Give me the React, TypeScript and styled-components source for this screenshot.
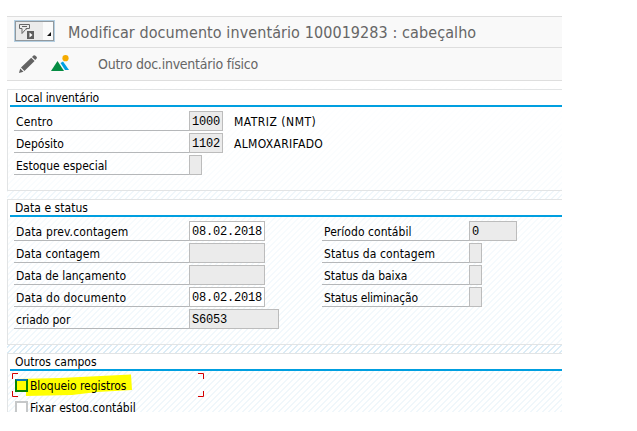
import React from 'react';
import styled, { createGlobalStyle } from 'styled-components';

const Global = createGlobalStyle`
  * { box-sizing: border-box; }
  body { margin: 0; background: #fff; }
`;

const Page = styled.div`
  width: 637px;
  height: 431px;
  padding: 16px 0 0 7px;
  overflow: hidden;
  background: #fff;
  font: 12px/15px 'DejaVu Sans Condensed', 'DejaVu Sans', sans-serif;
  font-stretch: condensed;
  color: #000;
`;

const Window = styled.div`
  width: 555px;
  height: 396px;
  overflow: hidden;
  display: flex;
  flex-direction: column;
  background:
    linear-gradient(#fff 64px, rgba(255, 255, 255, 0) 350px),
    repeating-linear-gradient(135deg, #d9ebf6 0 2px, #fff 2px 4.243px);
`;

const Bar = styled.div<{ $h: number }>`
  flex: none;
  height: ${p => p.$h}px;
  display: flex;
  align-items: center;
  border-top: 1px solid #dedede;
  background: #f9f9f9;
  color: #666;
`;

const ToolBar = styled(Bar)`
  border-bottom: 1px solid #dedede;
  padding-left: 12px;
`;

const CommandBox = styled.div`
  width: 41px;
  height: 22px;
  margin: -2px 0 0 7px;
  border: 1px solid #b4cfe2;
  box-shadow: inset 0 0 0 1px #92999e;
  background: linear-gradient(90deg, #ebebeb 28px, #fafafa 28px);
`;

const Text = styled.span<{ $track?: number }>`
  white-space: pre;
  letter-spacing: ${p => p.$track ?? 0}px;
`;

const Title = styled(Text)`
  font-size: 16px;
  line-height: 20px;
  margin: 1px 0 0 13px;
`;

const Action = styled(Text)`
  font-size: 14px;
  line-height: 18px;
  margin-left: 29px;
`;

const Panel = styled.section<{ $h: number }>`
  flex: none;
  height: ${p => p.$h}px;
  margin-top: 8px;
  border: 1px solid #e2e4e5;
  border-right: 0;
  background: rgba(255, 255, 255, 0.6);
`;

const PanelTitle = styled.header`
  height: 17px;
  padding: 1px 0 0 7px;
  background: linear-gradient(#009fe0, #009fe0) 2px 15px / 100% 2px no-repeat, #fff;
`;

const Columns = styled.div`
  display: grid;
  grid-template-columns: 308px 1fr;
  padding: 4px 0 0 6px;
`;

const Fields = styled.div`
  display: flex;
  flex-direction: column;
  gap: 2px;
`;

const Row = styled.div<{ $label: number }>`
  display: grid;
  grid-template-columns: ${p => p.$label}px auto 1fr;
  height: 20px;
`;

const Label = styled.div`
  border-bottom: 1px solid #b5b7b9;
  padding: 4px 0 0 2px;
  height: 20px;
`;

const Field = styled.div<{ $w: number; $editable?: boolean }>`
  width: ${p => p.$w}px;
  height: 20px;
  border: 1px solid #bcbcbc;
  background: ${p => (p.$editable ? '#fff' : '#ebebeb')};
  padding: 3px 0 0 2px;
  font: 12px/15px 'Liberation Mono', monospace;
`;

const Description = styled.div`
  padding: 4px 0 0 11px;
`;

const Options = styled.div`
  padding: 2px 0 0 4px;
`;

const Focus = styled.div`
  position: relative;
  width: 192px;
  height: 24px;
  margin-bottom: -2px;
`;

const Overlay = styled.svg`
  position: absolute;
  inset: 0;
  overflow: visible;
`;

const Option = styled.div`
  position: relative;
  display: flex;
  height: 22px;
  padding: 6px 0 0 3px;
  gap: 2px;
`;

const Check = styled.span<{ $active?: boolean }>`
  width: 13px;
  height: 13px;
  border: 2px solid ${p => (p.$active ? '#058205' : '#c6c8c9')};
  border-top-color: ${p => (p.$active ? '#0878b8' : '#c6c8c9')};
  background: ${p => (p.$active ? 'transparent' : '#fff')};
`;

type Item = { label: string; track?: number; w: number; value?: string; editable?: boolean; note?: string; noteTrack?: number };

const FieldList = ({ items, label }: { items: Item[]; label: number }) => (
  <Fields>
    {items.map(i => (
      <Row key={i.label} $label={label}>
        <Label><Text $track={i.track}>{i.label}</Text></Label>
        <Field $w={i.w} $editable={i.editable}><Text $track={-0.2}>{i.value}</Text></Field>
        {i.note && <Description><Text $track={i.noteTrack}>{i.note}</Text></Description>}
      </Row>
    ))}
  </Fields>
);

const place: Item[] = [
  { label: 'Centro', track: 0.15, w: 34, value: '1000', note: 'MATRIZ (NMT)', noteTrack: 0.5 },
  { label: 'Depósito', w: 34, value: '1102', note: 'ALMOXARIFADO', noteTrack: 0.33 },
  { label: 'Estoque especial', w: 13 },
];
const dates: Item[] = [
  { label: 'Data prev.contagem', track: 0.14, w: 76, value: '08.02.2018', editable: true },
  { label: 'Data contagem', track: 0.04, w: 76 },
  { label: 'Data de lançamento', w: 76 },
  { label: 'Data do documento', track: 0.18, w: 76, value: '08.02.2018', editable: true },
  { label: 'criado por', track: -0.05, w: 90, value: 'S6053' },
];
const statuses: Item[] = [
  { label: 'Período contábil', track: 0.05, w: 48, value: '0' },
  { label: 'Status da contagem', track: 0.12, w: 13 },
  { label: 'Status da baixa', track: -0.06, w: 13 },
  { label: 'Status eliminação', track: -0.16, w: 13 },
];

const CommandIcon = () => (
  <svg width="39" height="20" viewBox="0 0 39 20">
    <path d="M4.500 3.500h10v4h-3.500v1.500M4.500 3.500v4h2.500v5l3.500-4M7 5.500h5" fill="none" stroke="#666" />
    <path d="M12 10h7v8h-7z" fill="#5f5f5f" />
    <path d="M14.500 11.500v5l3-2.500z" fill="#fff" />
    <path d="M36 11v4h-4z" fill="#111" />
  </svg>
);

const PencilIcon = () => (
  <svg width="18" height="18" viewBox="0 0 18 18">
    <path d="M0 18l1.200-4.600 3.300 3.300zM2 12.500L12.200 2.700l3.400 3.300L5.400 16zM13 2l1.500-1.500q1-.8 2 .3l1 1q.9 1-.1 1.900L16.200 5z" fill="#636363" />
  </svg>
);

const PictureIcon = () => (
  <svg width="18" height="17" viewBox="0 0 18 17">
    <circle cx="14.500" cy="3.200" r="3.100" fill="#f5ab00" />
    <path d="M9.500 8l2.500-1.500L18 15h-4z" fill="#00a0e3" />
    <path d="M0 16L6.500 6 13 16z" fill="#058c43" />
  </svg>
);

const PictureSlot = styled.span`
  display: flex;
  margin: -1px 0 0 14px;
`;

export default function App() {
  return (
    <Page>
      <Global />
      <Window>
        <Bar $h={31}>
          <CommandBox><CommandIcon /></CommandBox>
          <Title $track={0.085}>Modificar documento inventário 100019283 : cabeçalho</Title>
        </Bar>
        <ToolBar $h={34}>
          <PencilIcon />
          <PictureSlot><PictureIcon /></PictureSlot>
          <Action $track={-0.24}>Outro doc.inventário físico</Action>
        </ToolBar>
        <Panel $h={102}>
          <PanelTitle><Text $track={-0.12}>Local inventário</Text></PanelTitle>
          <Columns><FieldList items={place} label={175} /></Columns>
        </Panel>
        <Panel $h={146}>
          <PanelTitle><Text $track={0.04}>Data e status</Text></PanelTitle>
          <Columns>
            <FieldList items={dates} label={175} />
            <FieldList items={statuses} label={147} />
          </Columns>
        </Panel>
        <Panel $h={80}>
          <PanelTitle><Text>Outros campos</Text></PanelTitle>
          <Options>
            <Focus>
              <Overlay width="192" height="24">
                <path d="M3 6L48 5l71-3.500 1 15.500-35 2-25 3-46 1v-5H3z" fill="#ff0" />
                <path d="M6 .5H.5V6M.5 18v5.500H6M186 .5h5.500V6M191.500 18v5.500H186" fill="none" stroke="#d40000" />
              </Overlay>
              <Option><Check $active /><Text $track={-0.05}>Bloqueio registros</Text></Option>
            </Focus>
            <Option><Check /><Text>Fixar estoq.contábil</Text></Option>
          </Options>
        </Panel>
      </Window>
    </Page>
  );
}
